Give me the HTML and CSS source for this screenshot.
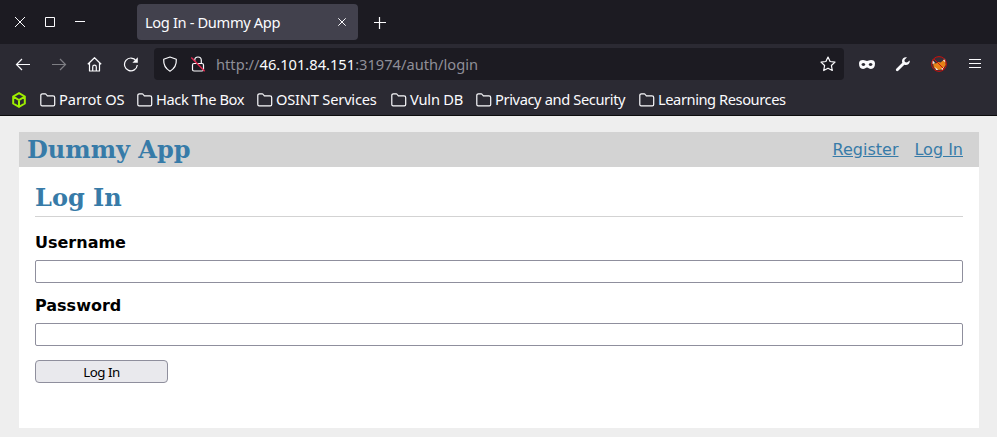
FILE: index.html
```html
<!DOCTYPE html>
<html lang="en">
<head>
<meta charset="utf-8">
<title>Log In - Dummy App</title>
<link rel="stylesheet" href="styles.css">
</head>
<body>
<div class="browser">
  <div class="titlebar">
    <div class="window-controls">
      <svg width="10" height="10" viewBox="0 0 10 10"><path d="M0 0l10 10M10 0L0 10"/></svg>
      <svg width="10" height="10" viewBox="0 0 10 10"><path d="M.5.5h9v9h-9z"/></svg>
      <svg width="10" height="10" viewBox="0 0 10 10"><path d="M0 4.5h10"/></svg>
    </div>
    <div class="tab">
      <span class="tab-title">Log In - Dummy App</span>
      <svg width="8" height="8" viewBox="0 0 8 8"><path d="M.3.3l7.4 7.4M7.7.3L.3 7.7"/></svg>
    </div>
    <svg class="new-tab" width="12" height="12" viewBox="0 0 12 12"><path d="M5.500 0v12M0 5.500h12"/></svg>
  </div>
  <div class="navbar">
    <div class="nav-buttons">
      <svg width="16" height="16" viewBox="0 0 16 16"><path d="M15 8.5H2M7 3L1.5 8.5 7 14"/></svg>
      <svg class="disabled" width="16" height="16" viewBox="0 0 16 16"><path d="M1 8.5h13M9 3l5.500 5.500L9 14"/></svg>
      <svg width="16" height="16" viewBox="0 0 16 16"><path stroke-linejoin="round" d="M.8 8.300L7.500 1.700 14.200 8.300M2.500 7v8h10V7M5.700 15v-4a1.800 1.800 0 0 1 3.600 0v4"/></svg>
      <svg width="16" height="16" viewBox="0 0 16 16"><path d="M13.2 4.8A6.4 6.4 0 1 0 14.3 9"/><path class="solid" d="M14.8 1.3v5.4H9.4z"/></svg>
    </div>
    <div class="urlbar">
      <svg width="16" height="16" viewBox="0 0 16 16"><path d="M8 1l6.3 2.3c.3 5-1.4 9.2-6.3 11.9C3.100 12.500 1.400 8.300 1.700 3.300z" stroke-linejoin="round"/></svg>
      <svg class="lock" width="16" height="16" viewBox="0 0 16 16"><rect x="2.500" y="7.500" width="11" height="7.500" rx="1.500"/><path d="M4.700 5V4.300a3.300 3.300 0 0 1 6.600 0v3.200"/><path class="slash" d="M1.300 1.500l13.400 13.800"/></svg>
      <span class="url">http://<b>46.101.84.151</b>:31974/auth/login</span>
      <svg class="star" width="16" height="16" viewBox="0 0 16 16"><path stroke-linejoin="round" d="M8 1l2.100 4.500 4.900.6-3.600 3.400.9 5L8 12.200l-4.300 2.300.9-5L1 6.100l4.900-.6z"/></svg>
    </div>
    <div class="extensions">
      <svg width="16" height="16" viewBox="0 0 16 16"><path class="solid" fill-rule="evenodd" d="M4 4C1.500 4 0 5 0 7.600 0 11 1.300 13 4 13c2 0 2.700-1.500 4-1.500S10 13 12 13c2.700 0 4-2 4-5.400C16 5 14.500 4 12 4 10 4 9.300 5 8 5S6 4 4 4zm.4 3c1 0 1.900.9 1.900 1.500s-.9 1.500-1.900 1.500-1.900-.9-1.900-1.500S3.400 7 4.400 7zm7.200 0c1 0 1.900.9 1.900 1.500s-.9 1.500-1.900 1.500-1.900-.9-1.900-1.500.9-1.500 1.900-1.500z"/></svg>
      <svg width="16" height="16" viewBox="0 0 16 16"><path class="solid" d="M14.700 4.400L12 6.600 9.900 6l-.5-2.100L12 1.300C9.500.6 7 2.300 7 5c0 .7.100 1.200.3 1.700L1.500 12.500c-1.700 1.700.3 3.700 2 2l5.800-5.700c3 1.200 6.100-1.300 5.400-4.400z"/></svg>
      <svg width="16" height="16" viewBox="0 0 16 16"><circle cx="8" cy="8" r="7.500" fill="#38303a" stroke="none"/><g stroke="none"><path fill="#e88217" d="M2 7l3 .5L7 6l2.500.5L14 3l.8 6-3 4L8 14l-5-2z"/><path fill="#f4e8df" d="M1 3.500l3 3.500-2.500 1zM12 4.500l2-2 .5 4zM4 11l3.500 3H5zM10 13l3-2-1 3z"/></g><circle class="ban" cx="8" cy="8" r="7.400"/><path class="ban" d="M2.800 2.800l10.400 10.400"/></svg>
      <svg class="menu" width="12" height="12" viewBox="0 0 12 12"><path d="M0 1.500h12M0 5.500h12M0 9.500h12"/></svg>
    </div>
  </div>
  <nav class="bookmarks">
    <svg class="cube" width="14" height="16" viewBox="0 0 14 16"><path d="M7 1.200l5.800 3.300v7L7 14.800l-5.800-3.300v-7zM1.200 4.500L7 8l5.800-3.500M7 8v6.800"/></svg>
    <span class="bookmark b1"><svg width="16" height="14" viewBox="0 0 16 14"><path d="M.8 11.500v-9Q.8.800 2.500.800h2.600q.7 0 1.200.7l1 1.300h5.700q1.700 0 1.700 1.700v7q0 1.300-1.300 1.300H2.100Q.8 12.800.8 11.500z"/></svg><span>Parrot OS</span></span>
    <span class="bookmark b2"><svg width="16" height="14" viewBox="0 0 16 14"><path d="M.8 11.500v-9Q.8.800 2.500.800h2.600q.7 0 1.200.7l1 1.300h5.700q1.700 0 1.700 1.700v7q0 1.300-1.300 1.300H2.100Q.8 12.800.8 11.500z"/></svg><span>Hack The Box</span></span>
    <span class="bookmark b3"><svg width="16" height="14" viewBox="0 0 16 14"><path d="M.8 11.500v-9Q.8.800 2.500.800h2.600q.7 0 1.200.7l1 1.300h5.700q1.700 0 1.700 1.700v7q0 1.300-1.300 1.300H2.100Q.8 12.800.8 11.500z"/></svg><span>OSINT Services</span></span>
    <span class="bookmark b4"><svg width="16" height="14" viewBox="0 0 16 14"><path d="M.8 11.500v-9Q.8.800 2.500.800h2.600q.7 0 1.200.7l1 1.300h5.700q1.700 0 1.700 1.700v7q0 1.300-1.300 1.300H2.100Q.8 12.800.8 11.500z"/></svg><span>Vuln DB</span></span>
    <span class="bookmark b5"><svg width="16" height="14" viewBox="0 0 16 14"><path d="M.8 11.500v-9Q.8.800 2.500.800h2.600q.7 0 1.200.7l1 1.300h5.700q1.700 0 1.700 1.700v7q0 1.300-1.300 1.300H2.100Q.8 12.800.8 11.500z"/></svg><span>Privacy and Security</span></span>
    <span class="bookmark b6"><svg width="16" height="14" viewBox="0 0 16 14"><path d="M.8 11.500v-9Q.8.800 2.500.800h2.600q.7 0 1.200.7l1 1.300h5.700q1.700 0 1.700 1.700v7q0 1.300-1.300 1.300H2.100Q.8 12.800.8 11.500z"/></svg><span>Learning Resources</span></span>
  </nav>
</div>
<div class="page">
  <header class="site-header">
    <h1>Dummy App</h1>
    <nav><a href="#">Register</a><a href="#">Log In</a></nav>
  </header>
  <main class="content">
    <h2>Log In</h2>
    <form>
      <label for="username">Username</label>
      <input id="username" type="text">
      <label for="password">Password</label>
      <input id="password" type="password">
      <button type="button">Log In</button>
    </form>
  </main>
</div>
</body>
</html>
```
FILE: styles.css
```css
* { box-sizing: border-box; }
body {
  margin: 0;
  height: 437px;
  overflow: hidden;
  background: #eee;
  font-family: "DejaVu Sans", sans-serif;
  font-size: 16px;
}
.browser {
  height: 116px;
  background: #2b2a33;
  border-bottom: 1px solid #0c0c0d;
  color: #fbfbfe;
  font-family: "Noto Sans", sans-serif;
  font-size: 14.667px;
}
svg { display: block; flex: none; fill: none; stroke: #fbfbfe; stroke-width: 1.2; }
.solid { fill: #fbfbfe; stroke: none; }
.titlebar { height: 44px; display: flex; background: #1c1b22; }
.window-controls { width: 137px; padding: 17px 0 0 15px; display: flex; gap: 20px; }
.window-controls svg { stroke-width: 1; }
.tab {
  width: 221px;
  height: 36px;
  margin-top: 4px;
  padding: 0 12px 0 8px;
  display: flex;
  align-items: center;
  justify-content: space-between;
  border-radius: 4px;
  background: #42414d;
}
.tab-title { white-space: nowrap; letter-spacing: -.36px; }
.tab svg { stroke-width: 1; }
.new-tab { margin: 17px 0 0 16px; }
.navbar { height: 40px; display: flex; align-items: center; }
.nav-buttons { width: 154px; padding-left: 15px; display: flex; gap: 20px; }
.disabled { opacity: .4; }
.urlbar {
  width: 690px;
  height: 32px;
  padding: 0 8px;
  display: flex;
  align-items: center;
  border-radius: 4px;
  background: #1c1b22;
}
.lock { margin-left: 12px; }
.slash { stroke: #e22850; stroke-width: 1.4; }
.url { margin-left: 10px; color: #8f8f98; white-space: nowrap; }
.url b { font-weight: 400; color: #fbfbfe; }
.star { margin-left: auto; }
.extensions { display: flex; align-items: center; gap: 20px; margin-left: 15px; }
.menu { margin-left: 2px; }
.ban { stroke: #c8100b; stroke-width: 1; }
.bookmarks { display: flex; align-items: center; height: 31px; padding-left: 12px; }
.cube { stroke: #9fef00; stroke-width: 2; margin-right: 14px; }
.bookmark { display: flex; align-items: center; gap: 3px; white-space: nowrap; }
.bookmark span { padding-bottom: 2px; }
.b1 { width: 97px; letter-spacing: -.1px; }
.b2 { width: 120px; letter-spacing: -.4px; }
.b3 { width: 134px; letter-spacing: -.2px; }
.b4 { width: 85px; letter-spacing: -.2px; }
.b5 { width: 163px; letter-spacing: -.38px; }
.b6 { letter-spacing: -.43px; }
.page { margin: 16px 18px 0 19px; color: #000; }
.site-header {
  height: 35px;
  padding: 0 16px 0 8px;
  display: flex;
  align-items: center;
  justify-content: space-between;
  background: lightgray;
}
.site-header nav { display: flex; gap: 16px; }
a { color: #377ba8; }
h1, h2 { margin: 0; color: #377ba8; font: bold 24px/28px "DejaVu Serif", serif; }
.content { height: 261px; padding: 17px 16px 0; background: #fff; }
h2 { height: 33px; border-bottom: 1px solid lightgray; }
form { display: flex; flex-direction: column; }
label { margin-top: 16px; font-weight: 700; line-height: 19px; }
input {
  height: 23px;
  margin: 8px 0 0;
  border: 1px solid #8f8f9d;
  border-radius: 2px;
  background: #fff;
}
input + label { margin-top: 13px; }
button {
  width: 133px;
  height: 23px;
  margin-top: 14px;
  padding: 1px 0 0;
  border: 1px solid #8f8f9d;
  border-radius: 4px;
  background: #e9e9ed;
  color: #000;
  font: 13.333px/20px "Noto Sans", sans-serif;
  letter-spacing: -.5px;
}
```
